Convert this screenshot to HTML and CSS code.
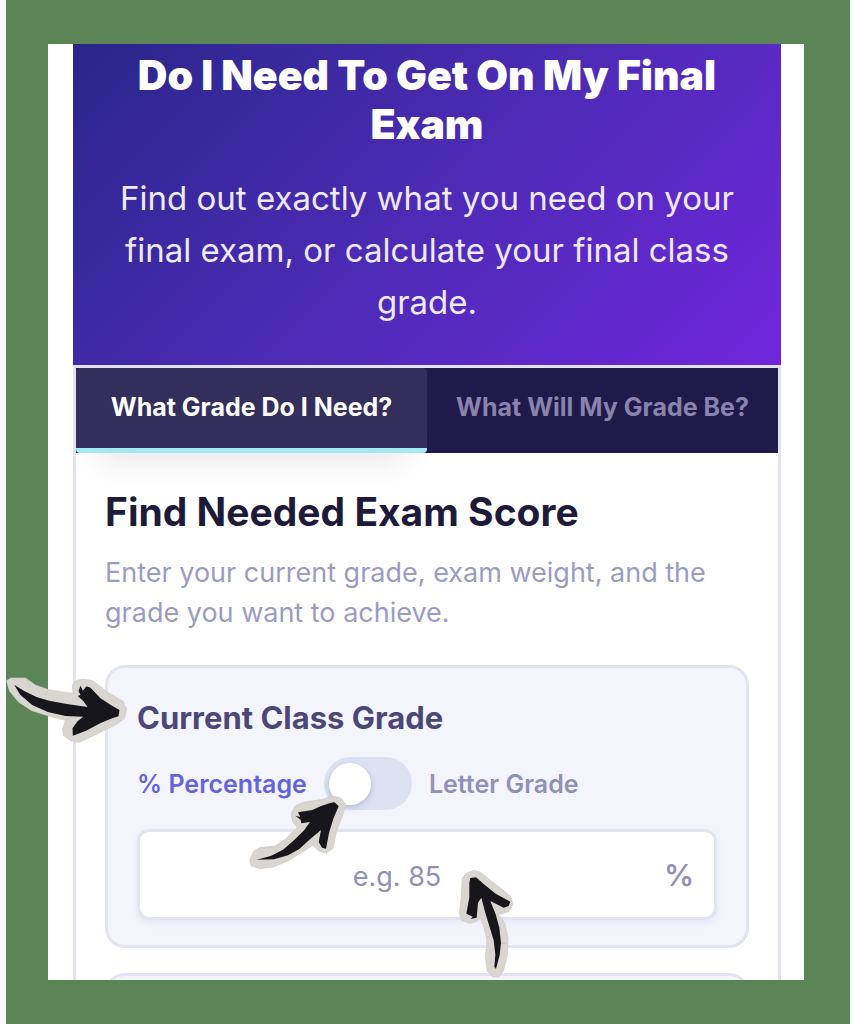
FILE: index.html
```html
<!DOCTYPE html>
<html lang="en">
<head>
    <meta charset="UTF-8">
    <meta name="viewport" content="width=device-width, initial-scale=1.0">
    <title>Final Exam Calculator</title>
    <link rel="stylesheet" href="styles.css">
</head>
<body>

<div class="frame">
    <main class="page">
        <header class="hero">
            <h1>Do I Need To Get On My Final Exam</h1>
            <p>Find out exactly what you need on your final exam, or calculate your final class grade.</p>
        </header>

        <div class="calculator">
            <div class="tabs">
                <button type="button" class="tab active">What Grade Do I Need?</button>
                <button type="button" class="tab">What Will My Grade Be?</button>
            </div>

            <form class="panel">
                <h2>Find Needed Exam Score</h2>
                <p class="intro">Enter your current grade, exam weight, and the grade you want to achieve.</p>

                <section class="card">
                    <label class="card-title" for="current-grade">Current Class Grade</label>

                    <div class="mode">
                        <label class="mode-label selected" for="grade-mode">% Percentage</label>
                        <span class="toggle">
                            <input type="checkbox" id="grade-mode">
                            <svg class="arrow arrow-toggle" viewBox="28 165 294 225" aria-hidden="true">
                                <path class="paper" d="M30 360 L42 334 L62 322 L104 319 L137 298 L173 262 L160 248 L154 222 L166 198 L190 187 L250 178 L278 168 L302 173 L318 192 L311 220 L290 275 L280 325 L260 340 L238 334 L220 316 L190 335 L145 363 L100 381 L60 386 L34 377 Z"/>
                                <path class="fold" d="M65 325 L98 323 L120 342 M135 302 L158 320 L154 346"/>
                                <path class="ink" d="M51 359 L95 347 L130 329 L163 301 L194 270 L211 246 L185 250 L183 239 L167 227 L182 231 L175 217 L218 210 L244 198 L274 188 L285 187 L297 199 L281 236 L268 279 L259 326 L247 323 L237 306 L244 270 L211 298 L179 327 L145 346 L103 358 Z"/>
                            </svg>
                        </span>
                        <label class="mode-label" for="grade-mode">Letter Grade</label>
                    </div>

                    <div class="field">
                        <input type="text" id="current-grade" placeholder="e.g. 85">
                        <span class="unit">%</span>
                        <svg class="arrow arrow-field" viewBox="86 60 162 324" aria-hidden="true">
                            <path class="paper" d="M96 83 L111 68 L132 61 L153 68 L181 92 L222 123 L243 142 L247 164 L235 185 L214 192 L205 191 L224 222 L233 264 L231 319 L219 364 L205 382 L186 380 L170 362 L165 319 L170 270 L161 233 L151 204 L139 214 L117 220 L94 211 L87 193 L93 136 Z"/>
                            <path class="fold" d="M169 265 L186 251 L201 282 L230 279"/>
                            <path class="ink" d="M120 84 L137 82 L160 102 L196 131 L240 155 L235 168 L220 173 L180 153 L196 193 L207 233 L212 279 L208 315 L197 357 L192 350 L195 314 L190 271 L176 225 L165 189 L153 143 L143 158 L139 203 L121 207 L127 200 L108 191 L117 142 L117 98 Z"/>
                        </svg>
                    </div>

                    <svg class="arrow arrow-card" viewBox="18 80 362 198" aria-hidden="true">
                        <path class="paper" d="M19 91 L32 83 L76 83 L107 105 L146 118 L191 125 L219 129 L216 105 L228 91 L247 86 L278 91 L321 125 L369 153 L379 176 L373 205 L348 222 L291 251 L238 276 L211 271 L190 256 L187 236 L196 210 L148 198 L95 181 L55 155 L28 122 Z"/>
                        <path class="fold" d="M79 86 L91 109 M91 180 L112 166 M144 119 L134 135 M193 210 L216 200"/>
                        <path class="ink" d="M42 103 L72 122 L109 140 L147 151 L200 161 L262 170 L250 153 L233 137 L241 133 L235 122 L241 106 L248 121 L259 108 L271 112 L301 144 L333 165 L358 179 L355 198 L336 204 L300 219 L258 241 L218 256 L217 234 L232 213 L249 199 L196 197 L143 185 L96 164 L60 133 Z"/>
                    </svg>
                </section>

                <section class="card"></section>
            </form>
        </div>
    </main>
</div>

</body>
</html>
```

FILE: styles.css
```css
* {
    box-sizing: border-box;
}

body {
    margin: 0;
    padding: 0 3px 0 6px;
    background-color: #f8faff;
    font-family: Inter, sans-serif;
}

h1, h2, p {
    margin: 0;
}

.frame {
    height: 100vh;
    padding: 44px 46px 44px 42px;
    background-color: #5b8556;
}

/* only the vertical overflow is cut, the arrows may hang over the sides */
.page {
    height: 100%;
    padding: 0 23px 0 25px;
    background-color: #fff;
    overflow-x: visible;
    overflow-y: clip;
}

.hero {
    padding: 7px 40px 37px;
    background: linear-gradient(135deg, #29268a 0%, #4c2bb5 50%, #7026dc 100%);
    color: #fff;
    text-align: center;
}

.hero h1 {
    margin-bottom: 23px;
    font-size: 41px;
    font-weight: 900;
    line-height: 49px;
}

.hero p {
    color: #eeeafc;
    font-size: 33px;
    line-height: 52px;
}

.calculator {
    border: 3px solid #e2e2f3;
}

.tabs {
    display: flex;
    background-color: #1f1a4a;
}

.tab {
    flex: 1;
    height: 85px;
    padding: 0 0 2px;
    border: 0;
    border-bottom: 5px solid transparent;
    background: none;
    color: #8983ad;
    font: 700 25px Inter, sans-serif;
    white-space: nowrap;
}

.tab.active {
    border-bottom-color: #a5e9f5;
    border-radius: 4px;
    background-color: #332e5c;
    box-shadow: 0 32px 32px -24px rgba(0, 0, 0, 0.1);
    color: #fff;
}

.panel {
    padding: 36px 29px 0;
}

.panel h2 {
    margin-bottom: 18px;
    color: #1e1b3a;
    font-size: 39px;
    font-weight: 700;
    line-height: 46px;
}

.intro {
    margin-bottom: 32px;
    color: #9a9cc3;
    font-size: 27px;
    line-height: 40px;
}

.card {
    position: relative;
    min-height: 120px;
    margin-bottom: 25px;
    padding: 32px 29px 25px;
    border: 3px solid #e3e4f1;
    border-radius: 20px;
    background-color: #f4f5fc;
}

.card-title {
    display: block;
    margin-bottom: 21px;
    color: #4b4879;
    font-size: 31px;
    font-weight: 700;
    line-height: 36px;
}

.mode {
    display: flex;
    align-items: center;
    gap: 17px;
    margin-bottom: 19px;
}

.mode-label {
    color: #9191b8;
    font-size: 25px;
    font-weight: 600;
}

.mode-label.selected {
    color: #6363dc;
}

.toggle {
    position: relative;
    display: flex;
}

.toggle input {
    display: flex;
    align-items: center;
    width: 88px;
    height: 53px;
    margin: 0;
    padding: 0 5px;
    border-radius: 27px;
    background-color: #dde2f3;
    appearance: none;
}

.toggle input::before {
    content: "";
    width: 42px;
    height: 42px;
    border-radius: 50%;
    background-color: #fff;
    box-shadow: 0 2px 6px rgba(60, 60, 120, 0.25);
}

.toggle input:checked {
    justify-content: flex-end;
}

.field {
    position: relative;
    display: flex;
    align-items: center;
    height: 91px;
    border: 3px solid #e3e4f1;
    border-radius: 12px;
    background-color: #fff;
    box-shadow: 0 3px 8px rgba(80, 80, 150, 0.08);
}

.field input {
    flex: 1;
    min-width: 0;
    height: 100%;
    padding: 4px 0 0;
    border: 0;
    background: none;
    color: #4b4879;
    font: 400 27px Inter, sans-serif;
    text-align: center;
}

.field input::placeholder {
    color: #9191b8;
}

.unit {
    width: 60px;
    padding-left: 10px;
    color: #9191b8;
    font-size: 30px;
    font-weight: 600;
}

/* paper cut-out arrows */
.arrow {
    position: absolute;
    z-index: 2;
    pointer-events: none;
}

.arrow-card {
    top: 9px;
    left: -102px;
    width: 121px;
    height: 66px;
}

.arrow-toggle {
    top: 38px;
    left: -75px;
    width: 98px;
    height: 75px;
}

.arrow-field {
    top: 38px;
    left: 319px;
    width: 54px;
    height: 108px;
}

.paper {
    fill: #d9d5d1;
    stroke: #cdc8c4;
    stroke-width: 2;
    stroke-linejoin: round;
}

.fold {
    fill: none;
    stroke: #c6c0bb;
    stroke-width: 2;
}

.ink {
    fill: #17161a;
}
```
